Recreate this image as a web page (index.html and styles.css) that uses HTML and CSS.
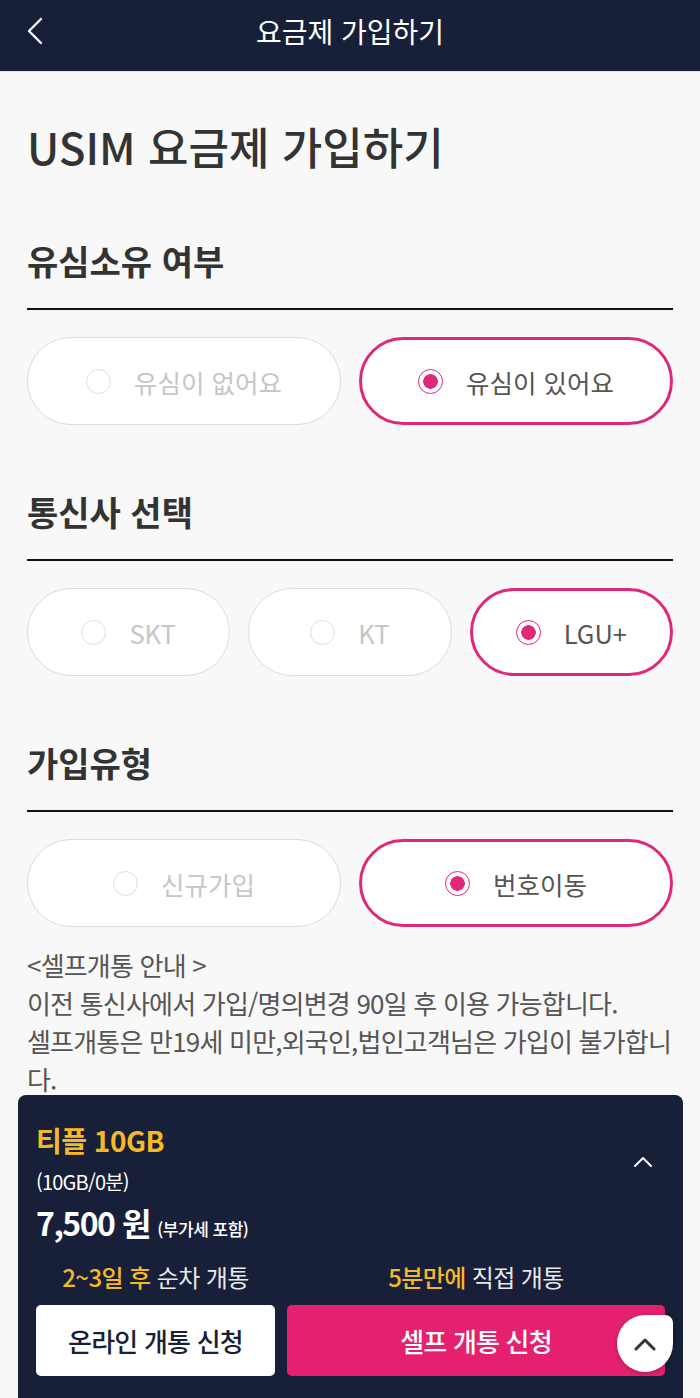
FILE: index.html
```html
<!DOCTYPE html>
<html lang="ko">
<head>
    <meta charset="UTF-8">
    <meta name="viewport" content="width=device-width, initial-scale=1.0">
    <title>요금제 가입하기</title>
    <link rel="stylesheet" href="styles.css">
</head>
<body>
    <header class="top-bar">
        <button class="back-btn" aria-label="뒤로">
            <svg width="18" height="28" viewBox="0 0 18 28">
                <path d="M15 2 L3 14 L15 26" fill="none" stroke="#fff" stroke-width="2.4" stroke-linecap="round" stroke-linejoin="round"/>
            </svg>
        </button>
        <h1>요금제 가입하기</h1>
    </header>

    <main class="content">
        <h2 class="page-title">USIM 요금제 가입하기</h2>

        <section class="group">
            <h3>유심소유 여부</h3>
            <div class="options two">
                <div class="option"><span class="radio"></span>유심이 없어요</div>
                <div class="option selected"><span class="radio"></span>유심이 있어요</div>
            </div>
        </section>

        <section class="group">
            <h3>통신사 선택</h3>
            <div class="options three">
                <div class="option"><span class="radio"></span>SKT</div>
                <div class="option"><span class="radio"></span>KT</div>
                <div class="option selected"><span class="radio"></span>LGU+</div>
            </div>
        </section>

        <section class="group">
            <h3>가입유형</h3>
            <div class="options two">
                <div class="option"><span class="radio"></span>신규가입</div>
                <div class="option selected"><span class="radio"></span>번호이동</div>
            </div>
        </section>

        <div class="notice">
            <p>&lt;셀프개통 안내 &gt;</p>
            <p>이전 통신사에서 가입/명의변경 90일 후 이용 가능합니다.</p>
            <p>셀프개통은 만19세 미만,외국인,법인고객님은 가입이 불가합니다.</p>
        </div>
    </main>

    <div class="plan-panel">
        <div class="plan-head">
            <div class="plan-info">
                <div class="plan-name">티플 10GB</div>
                <div class="plan-spec">(10GB/0분)</div>
                <div class="plan-price">7,500 원 <small>(부가세 포함)</small></div>
            </div>
            <svg class="toggle" width="20" height="12" viewBox="0 0 20 12">
                <path d="M2 10 L10 2 L18 10" fill="none" stroke="#fff" stroke-width="2" stroke-linecap="round" stroke-linejoin="round"/>
            </svg>
        </div>
        <div class="actions">
            <div class="action">
                <div class="action-note"><em>2~3일 후</em> 순차 개통</div>
                <button class="btn btn-online">온라인 개통 신청</button>
            </div>
            <div class="action wide">
                <div class="action-note"><em>5분만에</em> 직접 개통</div>
                <button class="btn btn-self">셀프 개통 신청</button>
            </div>
        </div>
    </div>

    <button class="scroll-top" aria-label="맨 위로">
        <svg width="24" height="14" viewBox="0 0 24 14">
            <path d="M3 12 L12 3 L21 12" fill="none" stroke="#333" stroke-width="3" stroke-linecap="round" stroke-linejoin="round"/>
        </svg>
    </button>
</body>
</html>
```

FILE: styles.css
```css
body {
    font-family: "Noto Sans CJK KR", "Noto Sans", sans-serif;
    margin: 0;
    padding: 0;
    background-color: #f8f8f8;
    color: #333;
}
button {
    font-family: inherit;
    cursor: pointer;
    border: none;
}
.top-bar {
    position: relative;
    height: 72px;
    background-color: #181f38;
    border-bottom: 1px solid #e2e2e2;
    display: flex;
    align-items: center;
    justify-content: center;
    box-sizing: border-box;
    padding-bottom: 10px;
}
.top-bar h1 {
    margin: 0;
    color: #fff;
    font-size: 28px;
    font-weight: 400;
}
.back-btn {
    position: absolute;
    left: 26px;
    top: 17px;
    background: none;
    padding: 0;
    line-height: 0;
}
.content {
    padding: 46px 27px 320px;
}
.page-title {
    margin: 0;
    font-size: 44px;
    line-height: 56px;
    font-weight: 500;
}
.group {
    margin-top: 67px;
}
.group h3 {
    margin: 0;
    font-size: 34px;
    line-height: 40px;
    font-weight: 700;
    padding-bottom: 27px;
    border-bottom: 2px solid #111;
}
.options {
    display: grid;
    gap: 18px;
    margin-top: 27px;
}
.options.two {
    grid-template-columns: 1fr 1fr;
}
.options.three {
    grid-template-columns: 1fr 1fr 1fr;
}
.option {
    height: 88px;
    box-sizing: border-box;
    border: 1px solid #dcdcdc;
    border-radius: 44px;
    background-color: #fff;
    display: flex;
    align-items: center;
    justify-content: center;
    gap: 23px;
    font-size: 25.5px;
    color: #c6c6c6;
}
.option.selected {
    border: 3px solid #e0287a;
    color: #555;
}
.radio {
    width: 25px;
    height: 25px;
    box-sizing: border-box;
    border: 1.5px solid #dddddd;
    border-radius: 50%;
    background-color: #fff;
}
.option.selected .radio {
    border: 1.5px solid #e0287a;
    background: radial-gradient(circle, #e0287a 0 7px, #fff 7.5px);
}
.notice {
    margin-top: 19px;
    font-size: 26px;
    line-height: 38px;
    color: #555;
    letter-spacing: -0.8px;
}
.notice p {
    margin: 0;
}
.plan-panel {
    position: fixed;
    left: 18px;
    right: 17px;
    bottom: 0;
    height: 303px;
    box-sizing: border-box;
    background-color: #181f38;
    border-radius: 8px 8px 0 0;
    padding: 25px 18px 15px;
    color: #fff;
}
.plan-head {
    display: flex;
    justify-content: space-between;
    align-items: flex-start;
}
.plan-name {
    color: #f5b928;
    font-size: 28px;
    line-height: 40px;
    font-weight: 700;
    letter-spacing: -0.5px;
}
.plan-spec {
    font-size: 20px;
    line-height: 30px;
    margin-top: 7px;
    letter-spacing: -0.8px;
}
.plan-price {
    font-size: 32px;
    line-height: 44px;
    font-weight: 700;
    margin-top: 3px;
    letter-spacing: -1.5px;
}
.plan-price small {
    font-size: 17px;
    font-weight: 500;
    letter-spacing: -0.5px;
}
.toggle {
    margin: 36px 12px 0 0;
}
.actions {
    display: flex;
    gap: 12px;
    margin-top: 9px;
}
.action {
    flex: 0 0 239px;
    display: flex;
    flex-direction: column;
    align-items: center;
}
.action.wide {
    flex: 1;
}
.action-note {
    font-size: 24px;
    line-height: 34px;
    letter-spacing: -0.6px;
    color: #e8e8e8;
    margin-bottom: 11px;
}
.action-note em {
    font-style: normal;
    color: #f5b928;
    font-weight: 500;
}
.btn {
    width: 100%;
    height: 71px;
    border-radius: 5px;
    font-size: 26px;
    font-weight: 500;
    letter-spacing: -0.8px;
}
.btn-online {
    background-color: #fff;
    color: #1a1f38;
}
.btn-self {
    background-color: #e5206f;
    color: #fff;
}
.scroll-top {
    position: fixed;
    left: 617px;
    top: 1315px;
    width: 56px;
    height: 57px;
    padding: 0;
    background-color: #fff;
    border-radius: 50% 8px 50% 50%;
    box-shadow: 0 1px 4px rgba(0, 0, 0, 0.25);
    display: flex;
    align-items: center;
    justify-content: center;
}
```
